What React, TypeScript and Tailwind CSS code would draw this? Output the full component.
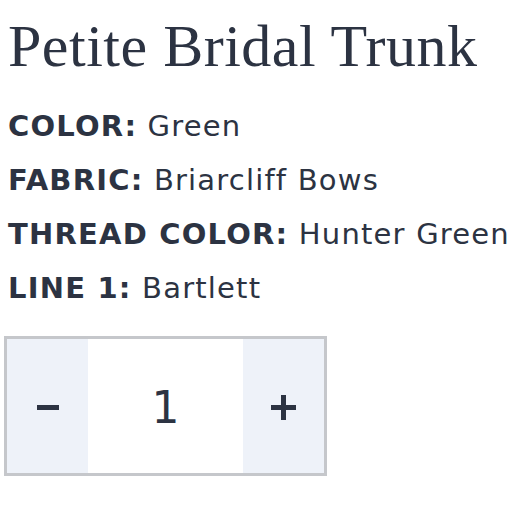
const options = [
  { label: "COLOR", value: "Green" },
  { label: "FABRIC", value: "Briarcliff Bows" },
  { label: "THREAD COLOR", value: "Hunter Green" },
  { label: "LINE 1", value: "Bartlett" },
];

export default function App() {
  return (
    <div className="min-h-screen w-[508px] overflow-hidden bg-white pl-2 text-[#2c3342]">
      <h1 className="pt-[13px] font-['Liberation_Serif',serif] text-[60px] leading-[66px] tracking-[0.5px] whitespace-nowrap">
        Petite Bridal Trunk
      </h1>

      <ul className="mt-[20px] font-['DejaVu_Sans',sans-serif] text-[29px] leading-[54px] tracking-[1.2px] whitespace-nowrap">
        {options.map((o) => (
          <li key={o.label}>
            <span className="font-semibold">{o.label}:</span> {o.value}
          </li>
        ))}
      </ul>

      <div className="mt-[21px] -ml-1 flex h-[140px] w-[323px] border-[3px] border-[#c5c7cb]">
        <button className="flex w-[81px] items-center justify-center bg-[#eef2f9]">
          <svg width="22" height="5" viewBox="0 0 22 5" className="mt-[2px]">
            <rect width="22" height="5" fill="#2c3342" />
          </svg>
        </button>
        <div className="flex flex-1 items-center justify-center pt-[4px] font-['DejaVu_Sans',sans-serif] text-[44px]">
          1
        </div>
        <button className="flex w-[81px] items-center justify-center bg-[#eef2f9]">
          <svg width="25" height="25" viewBox="0 0 25 25" className="mt-[2px]">
            <rect x="0" y="10" width="25" height="5" fill="#2c3342" />
            <rect x="10" y="0" width="5" height="25" fill="#2c3342" />
          </svg>
        </button>
      </div>
    </div>
  );
}
